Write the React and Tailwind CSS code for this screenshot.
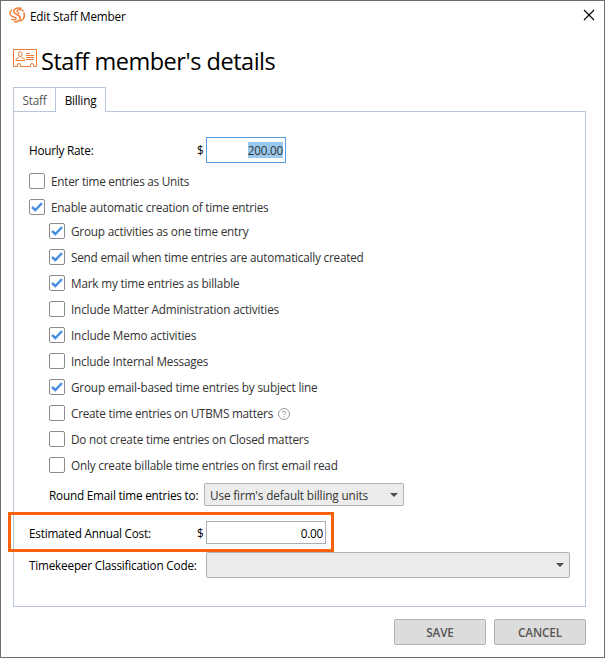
import React from "react";

// ================= DATA =================

const activityOptions = [
  { label: "Group activities as one time entry", checked: true, spacing: "tracking-[-0.19px]" },
  { label: "Send email when time entries are automatically created", checked: true, spacing: "tracking-[-0.22px]" },
  { label: "Mark my time entries as billable", checked: true, spacing: "tracking-[-0.18px]" },
  { label: "Include Matter Administration activities", checked: false, spacing: "tracking-[-0.17px]" },
  { label: "Include Memo activities", checked: true, spacing: "tracking-[-0.16px]" },
  { label: "Include Internal Messages", checked: false, spacing: "tracking-[-0.21px]" },
  { label: "Group email-based time entries by subject line", checked: true, spacing: "tracking-[-0.18px]" },
  { label: "Create time entries on UTBMS matters", checked: false, help: true, spacing: "tracking-[-0.24px]" },
  { label: "Do not create time entries on Closed matters", checked: false, spacing: "tracking-[-0.19px]" },
  { label: "Only create billable time entries on first email read", checked: false, spacing: "tracking-[-0.19px]" },
];

// ================= ICONS =================

const LogoIcon = () => (
  <svg width="16" height="16" viewBox="0 0 16 16" fill="none" stroke="#f07a35" strokeLinecap="round" className="mb-px">
    <path d="M11.800 1.300C8.500.3 4.700 1.500 4.700 4.400c0 3.200 6.500 3.100 6.500 6.500 0 2.300-2.500 4.200-5.600 4" strokeWidth="1.500" />
    <path d="M14.300 3.800C12.200 2 8 2.300 8 4.300c0 1 .9 1.500 1.900 2" strokeWidth="1.300" />
    <path d="M2.700 2.900C.6 4.900.4 7.600 2.300 8.900c1.900 1.200 5.100 1.600 4.900 3-.2 1.300-2.900 1.300-4.600.3" strokeWidth="1.300" />
    <path d="M15 6c.9 3.500-.8 6.500-3.500 8" strokeWidth="1.500" />
  </svg>
);

const BadgeIcon = () => (
  <svg width="24" height="18" viewBox="0 0 24 18" fill="none" stroke="#f07a35" className="mb-px">
    <path d="M.5.5h23v17h-3v-1.500q0-1.500-1.500-1.500t-1.500 1.500v1.500h-10v-1.500q0-1.500-1.500-1.500t-1.500 1.500v1.500h-4z" />
    <path d="M5.500 4.500q0-1.800 1.800-1.800t1.800 1.800v1.200q0 2-1.800 2t-1.800-2zM3 11.500V10.500q0-1 1.500-1.300l1.500-.5M8.600 8.700l1.500.5q1.500.3 1.500 1.300V11.500H3" />
    <path d="M13 4.500h4M13 6.500h8M13 8.500h8M13 10.500h8" />
  </svg>
);

const Caret = ({ className = "" }) => (
  <svg width="8" height="4" viewBox="0 0 8 4" className={`shrink-0 ${className}`}>
    <path d="M0 0h8L4 4z" fill="#4d4d4d" />
  </svg>
);

const HelpIcon = () => (
  <svg width="12" height="12" viewBox="0 0 12 12" fill="none" stroke="#999" className="mt-[2px] ml-[5px]">
    <circle cx="6" cy="6" r="5.500" />
    <path d="M4.400 4.700q0-1.500 1.600-1.500t1.600 1.400q0 .8-.9 1.300-.7.400-.7 1.200M6 8.200v1.100" />
  </svg>
);

// ================= FIELDS =================

const Checkbox = ({ label, checked, help, spacing }) => (
  <label className="flex h-[26px] items-center text-[#333]">
    <span className="mr-[6px] flex size-4 shrink-0 items-center justify-center rounded-[2px] border border-[#8c8c8c] bg-white">
      {checked && (
        <svg width="12" height="10" viewBox="0 0 12 10" fill="none">
          <path d="M1 5l3.300 3L11 1.200" stroke="#4a90e2" strokeWidth="2.400" />
        </svg>
      )}
    </span>
    <span className={spacing}>{label}</span>
    {help && <HelpIcon />}
  </label>
);

const Tabs = () => (
  <div className="relative z-10 -mb-px flex h-[25px]">
    <div className="flex w-[43px] items-center justify-center border border-[#b9c6d8] text-[#555] tracking-[-0.2px]">
      Staff
    </div>
    <div className="-ml-px flex w-[51px] items-center justify-center border border-b-0 border-[#b9c6d8] bg-white text-black tracking-[-0.2px]">
      Billing
    </div>
  </div>
);

// ================= DIALOG =================

const App = () => {
  return (
    <div className="flex h-[658px] w-[605px] flex-col border border-[#6f6f6f] bg-white font-['Open_Sans',sans-serif] text-[11.75px] leading-4 text-black">
      {/* Title bar */}
      <div className="flex h-[29px] shrink-0 items-center pr-[9px] pl-2">
        <LogoIcon />
        <span className="ml-[5px] tracking-[-0.18px]">Edit Staff Member</span>
        <svg width="12" height="12" viewBox="0 0 12 12" className="mb-px ml-auto" stroke="#000" strokeWidth="1.100">
          <path d="M1 1l10 10M11 1L1 11" />
        </svg>
      </div>

      {/* Heading */}
      <div className="flex h-[57px] shrink-0 items-center pl-3">
        <BadgeIcon />
        <h1 className="mt-[4px] ml-1 text-[23.5px] leading-8 tracking-[-0.47px] whitespace-nowrap">Staff member's details</h1>
      </div>

      <div className="mx-3 w-[573px] shrink-0">
        <Tabs />

        <div className="relative flex h-[496px] flex-col border border-[#b9c6d8] pt-[25px] pl-[15px]">
          <div className="flex h-[26px] items-center">
            <span className="w-[168px] tracking-[-0.23px]">Hourly Rate:</span>
            <span className="w-[9px]">$</span>
            <div className="flex h-[26px] w-20 items-center justify-end border border-[#569de5] pr-[2px]">
              <span className="bg-[#99c9ef] text-[#333] tracking-[-0.25px]">200.00</span>
            </div>
          </div>

          <div className="mt-[5px]">
            <Checkbox label="Enter time entries as Units" spacing="tracking-[-0.25px]" />
            <Checkbox label="Enable automatic creation of time entries" checked spacing="tracking-[-0.21px]" />
          </div>
          <div className="-mt-[2px] pl-5">
            {activityOptions.map((option) => (
              <Checkbox key={option.label} {...option} />
            ))}
          </div>

          <div className="mt-[5px] flex h-[23px] shrink-0 items-center pl-5">
            <span className="w-[155px] pt-px whitespace-nowrap tracking-[-0.2px]">Round Email time entries to:</span>
            <div className="flex h-[23px] w-[200px] items-center justify-between rounded-[2px] border border-[#b3b3b3] bg-[#ececec] pr-[5px] pl-[5px] text-[#333]">
              <span className="whitespace-nowrap tracking-[-0.13px]">Use firm's default billing units</span>
              <Caret className="mt-px" />
            </div>
          </div>

          <div className="mt-[15px] flex h-[23px] shrink-0 items-center">
            <span className="w-[168px] pt-px tracking-[-0.22px]">Estimated Annual Cost:</span>
            <span className="w-[9px] pt-px">$</span>
            <div className="flex h-[23px] w-[120px] items-center justify-end border border-[#abadb3] pr-[2px] tracking-[-0.25px]">
              0.00
            </div>
          </div>

          <div className="mt-2 flex h-[26px] shrink-0 items-center">
            <span className="w-[177px] whitespace-nowrap tracking-[-0.2px]">Timekeeper Classification Code:</span>
            <div className="flex h-[26px] w-[364px] items-center justify-end rounded-[2px] border border-[#b3b3b3] bg-[#ececec] pr-[5px]">
              <Caret />
            </div>
          </div>

          {/* Callout around the annual cost */}
          <div className="absolute top-[400px] left-[-6px] h-[40px] w-[326px] border-3 border-[#f9610c]" />
        </div>
      </div>

      {/* Actions */}
      <div className="mt-3 mr-[18px] flex justify-end gap-2 font-semibold text-[#555]">
        <button className="h-[26px] w-[92px] rounded-[2px] border border-[#b3b3b3] bg-[#dcdcdc] tracking-[-0.2px]">SAVE</button>
        <button className="h-[26px] w-[92px] rounded-[2px] border border-[#b3b3b3] bg-[#dcdcdc] tracking-[-0.1px]">CANCEL</button>
      </div>
    </div>
  );
};

export default App;
